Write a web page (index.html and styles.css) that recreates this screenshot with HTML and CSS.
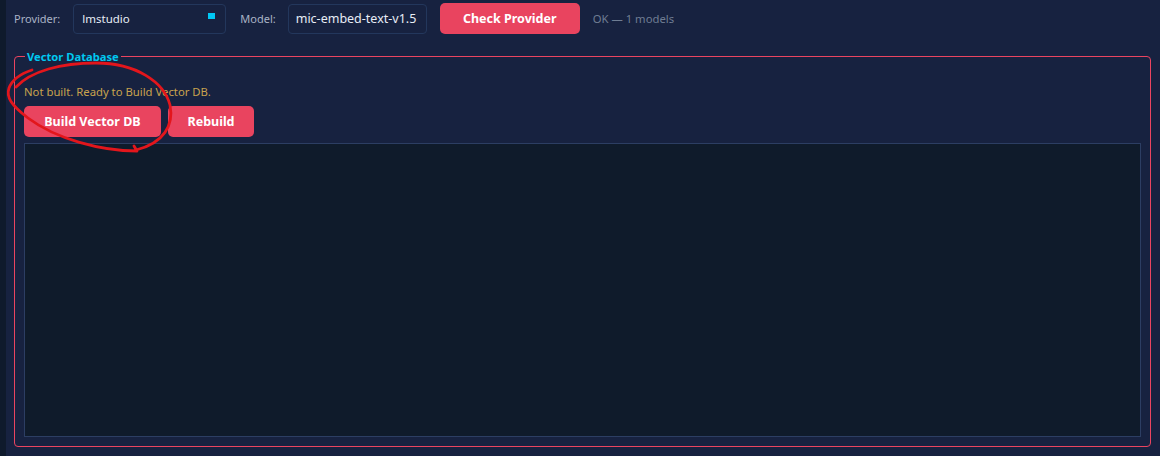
FILE: index.html
```html
<!DOCTYPE html>
<html>
<head>
<meta charset="utf-8">
<link rel="stylesheet" href="styles.css">
</head>
<body>
<div class="app">
  <div class="toolbar">
    <span class="label">Provider:</span>
    <div class="select">
      <span class="select-text">lmstudio</span>
      <span class="select-mark"></span>
    </div>
    <span class="label label-model">Model:</span>
    <div class="input">mic-embed-text-v1.5</div>
    <button class="btn btn-check">Check Provider</button>
    <span class="status-ok">OK — 1 models</span>
  </div>
  <fieldset class="panel">
    <legend class="panel-title">Vector Database</legend>
    <div class="panel-status">Not built. Ready to Build Vector DB.</div>
    <div class="actions">
      <button class="btn btn-build">Build Vector DB</button>
      <button class="btn btn-rebuild">Rebuild</button>
    </div>
    <div class="log"></div>
  </fieldset>
  <svg class="annotation" width="180" height="100" viewBox="0 0 180 100">
    <path d="M 10 27 C 25 11, 55 3, 90 3 C 130 3, 158 22, 164 45 C 168 65, 158 83, 130 90" fill="none" stroke="#e3161c" stroke-width="2.8" stroke-linecap="round" stroke-linejoin="round"/>
    <path d="M 128 86 L 131 91 C 95 91, 50 79, 22 58 C 5 45, 0 37, 3 28 C 6 20, 14 14, 26 10" fill="none" stroke="#e3161c" stroke-width="2.8" stroke-linecap="round" stroke-linejoin="round"/>
  </svg>
</div>
</body>
</html>
```
FILE: styles.css
```css
html, body {
  margin: 0;
  padding: 0;
}
body {
  background: #172240;
  font-family: "Noto Sans", "Open Sans", sans-serif;
  width: 1160px;
  height: 456px;
  overflow: hidden;
}
.app {
  position: relative;
  height: 456px;
  box-sizing: border-box;
  border-left: 6px solid #0f1a2c;
  padding: 3px 9px 9px 8px;
}
.toolbar {
  display: flex;
  align-items: center;
  height: 31px;
}
.label {
  color: #a9b3c6;
  font-size: 11px;
  margin-right: 13px;
}
.label-model {
  margin-left: 14px;
  margin-right: 12px;
}
.select {
  width: 153px;
  height: 30px;
  box-sizing: border-box;
  border: 1px solid #23375c;
  border-radius: 4px;
  display: flex;
  align-items: center;
  justify-content: space-between;
  padding: 0 10px 0 8px;
}
.select-text {
  color: #e8edf6;
  font-size: 11.5px;
}
.select-mark {
  width: 7px;
  height: 6px;
  background: #00c8f5;
  align-self: flex-start;
  margin-top: 8px;
}
.input {
  width: 139px;
  height: 30px;
  box-sizing: border-box;
  border: 1px solid #23375c;
  border-radius: 4px;
  color: #e8edf6;
  font-size: 12.5px;
  display: flex;
  align-items: center;
  padding-left: 7px;
  white-space: nowrap;
  overflow: hidden;
}
.btn {
  background: #e9445f;
  border: none;
  border-radius: 5px;
  color: #ffffff;
  font-family: "Noto Sans", "Open Sans", sans-serif;
  font-weight: 700;
  font-size: 12.5px;
  height: 31px;
  padding: 0;
  cursor: pointer;
}
.btn-check {
  width: 140px;
  margin-left: 13px;
}
.status-ok {
  color: #6f7d93;
  font-size: 11.3px;
  margin-left: 13px;
}
.panel {
  margin: 14px 0 0 0;
  border: 1px solid #ea4460;
  border-radius: 4px;
  padding: 0 9px 9px 9px;
  height: 399px;
  box-sizing: border-box;
  display: flex;
  flex-direction: column;
}
.panel-title {
  color: #00c8f0;
  font-weight: 700;
  font-size: 11.2px;
  line-height: 17px;
  height: 17px;
  padding: 0 2px;
  margin-left: 1px;
}
.panel-status {
  color: #c9a24e;
  font-size: 11.3px;
  margin-top: 17px;
  height: 20px;
  line-height: 20px;
}
.actions {
  display: flex;
  gap: 7px;
  margin-top: 4px;
}
.btn-build {
  width: 137px;
}
.btn-rebuild {
  width: 86px;
}
.log {
  margin-top: 6px;
  flex: 1;
  background: #0f1b2b;
  border: 1px solid #2c3e63;
}
.annotation {
  position: absolute;
  left: 0;
  top: 60px;
  overflow: visible;
}
```
